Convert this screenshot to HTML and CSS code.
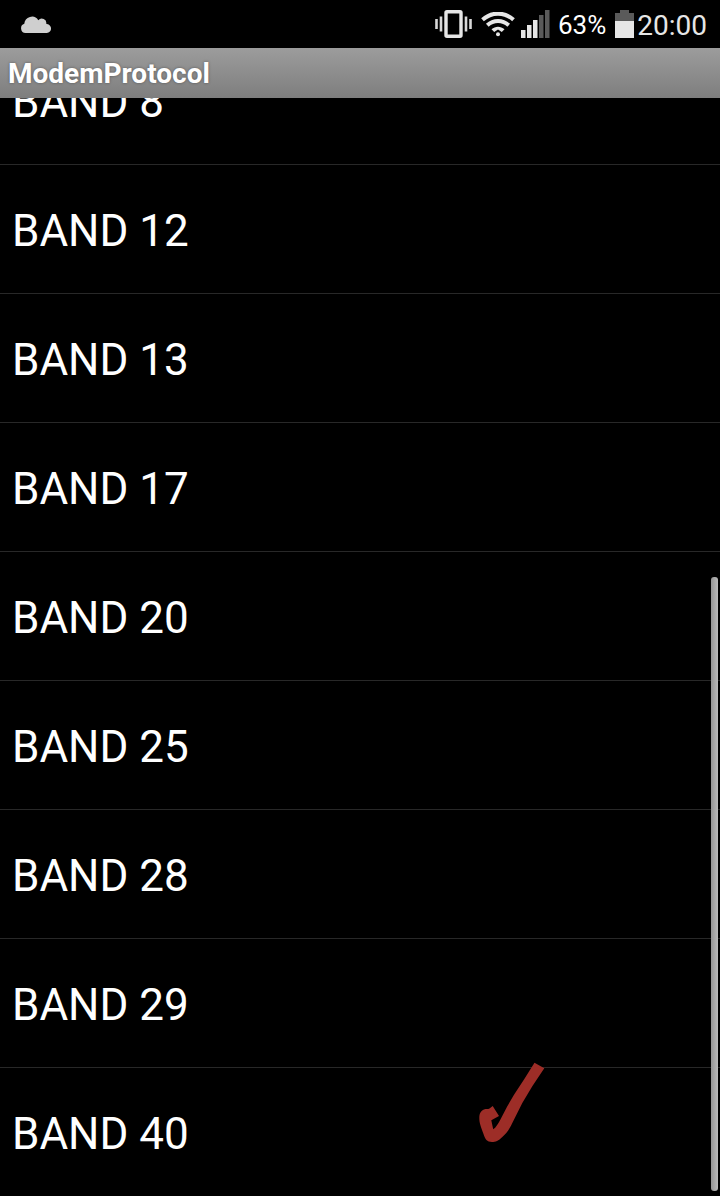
FILE: index.html
```
<!DOCTYPE html>
<html lang="en">
<head>
  <meta charset="UTF-8">
  <title>ModemProtocol</title>
  <link rel="stylesheet" href="styles.css">
</head>
<body>
  <div class="screen">
    <header class="status-bar">
      <svg class="cloud" width="30" height="18" viewBox="0 0 30 18">
        <path d="M4.5 18A4.5 4.7 0 0 1 3.3 8.8A7.6 7.6 0 0 1 17.3 5.2A4.6 4.6 0 0 1 25.3 9A4.5 4.5 0 0 1 25.8 18Z" fill="#cfcfcf"/>
      </svg>
      <div class="status-icons">
        <svg class="vibrate" width="37" height="28" viewBox="0 0 37 28">
          <path d="M1.5 9v10M6 6.500v15M31 6.500v15M35.500 9v10" stroke="#d8d8d8" stroke-width="2.600"/>
          <rect x="11" y="1.700" width="15" height="24.600" rx="1" fill="none" stroke="#e6e6e6" stroke-width="3.400"/>
        </svg>
        <svg class="wifi" width="34" height="25" viewBox="0 0 34 25">
          <path d="M1.500 7.700C10.500 -.4 23.500 -.4 32.500 7.700M6.300 13.300C12.500 7.600 21.500 7.600 27.700 13.300" fill="none" stroke="#e6e6e6" stroke-width="4"/>
          <path d="M10.500 17.200C14.300 13.800 19.700 13.800 23.500 17.200L20.800 20L17 17.500L13.200 20Z" fill="#e6e6e6"/>
          <circle cx="17" cy="22.300" r="2" fill="#e6e6e6"/>
        </svg>
        <svg class="signal" width="29" height="28" viewBox="0 0 29 28">
          <path d="M0 20h4.500v8H0zM6 15h4.500v13H6zM12 10h4.500v18h-4.500z" fill="#e6e6e6"/>
          <path d="M18 5h4.500v23h-4.500zM24 0h4.500v28h-4.500z" fill="#5a5a5a"/>
        </svg>
        <span class="percent">63%</span>
        <svg class="battery" width="19" height="28" viewBox="0 0 19 28">
          <path d="M5 0h9v3h5v8H0V3h5z" fill="#5a5a5a"/>
          <path d="M0 11h19v17H0z" fill="#e6e6e6"/>
        </svg>
        <span class="clock">20:00</span>
      </div>
    </header>

    <h1 class="title-bar">ModemProtocol</h1>

    <main class="list-view">
      <ul class="bands">
        <li>BAND 8</li>
        <li>BAND 12</li>
        <li>BAND 13</li>
        <li>BAND 17</li>
        <li>BAND 20</li>
        <li>BAND 25</li>
        <li>BAND 28</li>
        <li>BAND 29</li>
        <li>BAND 40</li>
      </ul>
      <div class="scrollbar"></div>
      <svg class="tick" width="66" height="82" viewBox="0 0 66 82">
        <path d="M55.500 .7L65.300 6.300L53.300 24.300L43.300 41L33.300 61C30 68 27 71.500 23.300 75C19.500 79 16.500 80 13 80C8 80 6 77 4.500 72C2 65 .3 61 .3 56C.3 51 2 49 5 47.500C7 46.500 9 47.500 10.500 46.500L13.700 44L20 54L12.300 58.300L14.200 67.300C17 65.500 19 62 21.700 57L28.300 44.300L35 32.700L45 17.500Z" fill="#9d2d27"/>
      </svg>
    </main>
  </div>
</body>
</html>
```

FILE: styles.css
```
body {
  margin: 0;
  background-color: #000;
  color: #fff;
  font-family: Roboto, sans-serif;
}

.screen {
  display: flex;
  flex-direction: column;
  height: 1196px;
  overflow: hidden;
}

/* Status bar */
.status-bar {
  display: flex;
  justify-content: space-between;
  align-items: center;
  height: 48px;
  padding: 0 13px 0 21px;
  box-sizing: border-box;
}

.status-icons {
  display: flex;
  align-items: center;
}

.wifi {
  margin-left: 9px;
  margin-right: 6px;
}

.percent {
  margin: 2px 9px 0 8px;
  font-size: 26px;
  line-height: 30px;
}

.clock {
  margin: 3px 0 0 3px;
  font-size: 28px;
  line-height: 34px;
  color: #e6e6e6;
}

/* Title */
.title-bar {
  height: 50px;
  margin: 0;
  padding-left: 8px;
  box-sizing: border-box;
  background-image: linear-gradient(to bottom, #9c9c9c, #7e7e7e);
  font-size: 28px;
  font-weight: bold;
  line-height: 52px;
  text-shadow: 0 0 3px rgba(0, 0, 0, 0.4);
}

/* Band list, scrolled part of the way down */
.list-view {
  position: relative;
  flex: 1;
  overflow: hidden;
}

.bands {
  margin: -62px 0 0;
  padding: 0;
  list-style: none;
}

.bands li {
  height: 128px;
  padding-left: 12px;
  border-bottom: 1px solid #282828;
  font-size: 44px;
  line-height: 133px;
}

.scrollbar {
  position: absolute;
  top: 479px;
  right: 2px;
  bottom: 5px;
  width: 7px;
  border-radius: 3px;
  background-image: linear-gradient(to right, #949494, #bababa);
}

.tick {
  position: absolute;
  left: 479px;
  top: 964px;
}
```
